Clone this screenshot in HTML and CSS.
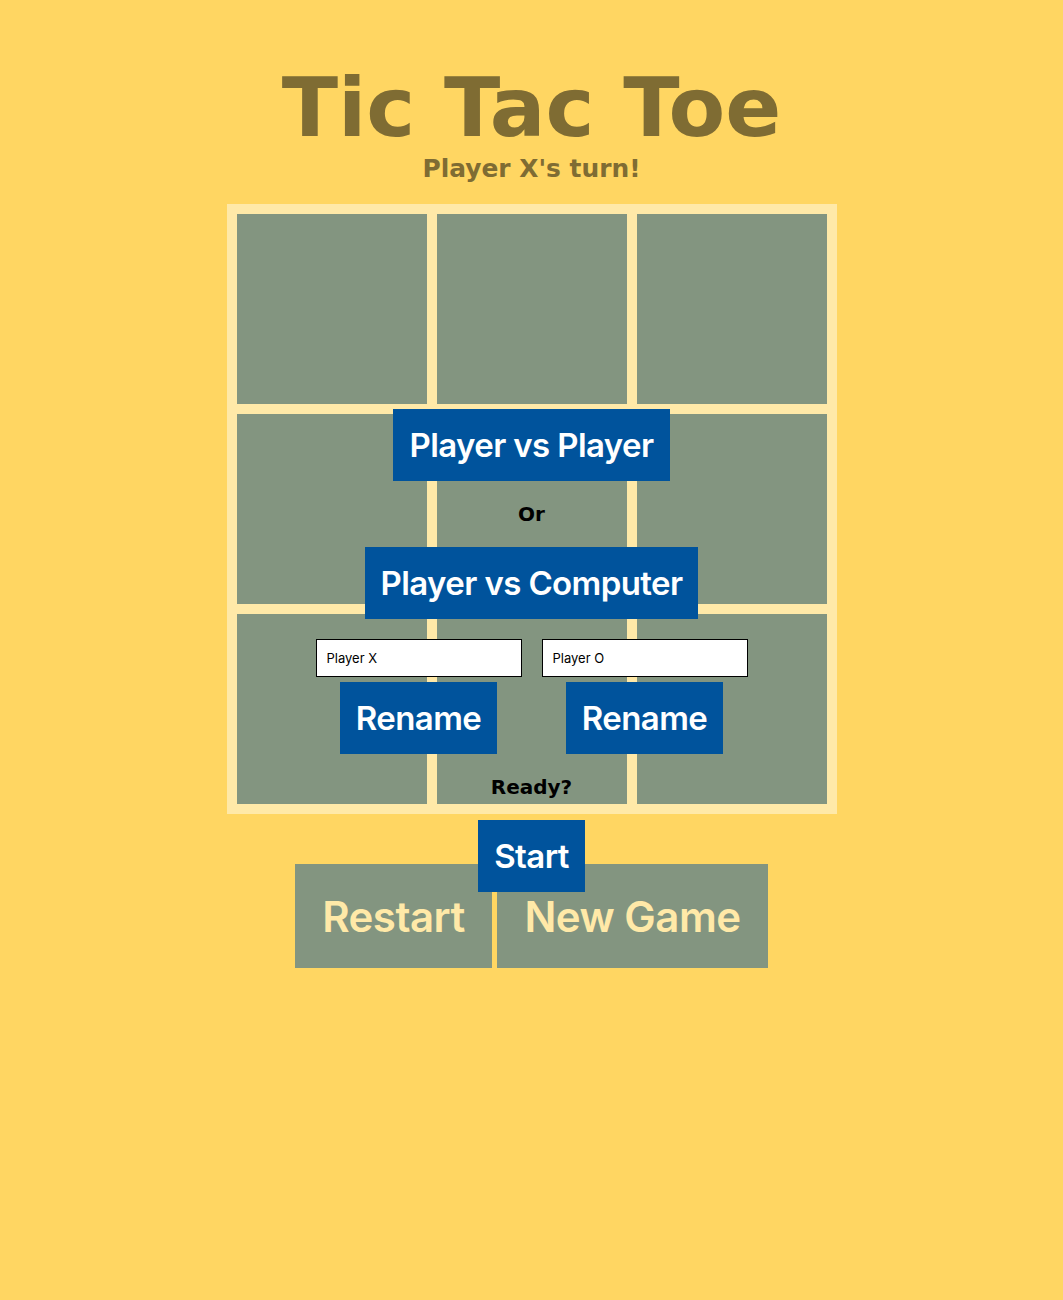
FILE: index.html
```html
<!DOCTYPE html>
<html lang="en">
<head>
<meta charset="utf-8">
<title>Tic Tac Toe</title>
<link rel="stylesheet" href="styles.css">
</head>
<body>
<main class="page">
  <h1 class="title">Tic Tac Toe</h1>
  <h2 class="status">Player X's turn!</h2>
  <div class="game">
    <div class="board">
      <div class="cell"></div><div class="cell"></div><div class="cell"></div>
      <div class="cell"></div><div class="cell"></div><div class="cell"></div>
      <div class="cell"></div><div class="cell"></div><div class="cell"></div>
    </div>
    <div class="controls">
      <button class="ctrl ctrl-restart">Restart</button>
      <button class="ctrl ctrl-new">New Game</button>
    </div>
    <div class="setup">
      <button class="btn">Player vs Player</button>
      <p class="label">Or</p>
      <button class="btn">Player vs Computer</button>
      <div class="names">
        <div class="name-col">
          <input class="name-input" type="text" value="Player X">
          <button class="btn">Rename</button>
        </div>
        <div class="name-col">
          <input class="name-input" type="text" value="Player O">
          <button class="btn">Rename</button>
        </div>
      </div>
      <p class="label">Ready?</p>
      <button class="btn">Start</button>
    </div>
  </div>
</main>
</body>
</html>
```
FILE: styles.css
```css
html, body {
  margin: 0;
  padding: 0;
  background: #FFD662;
}
body {
  min-height: 1300px;
  font-family: "DejaVu Sans", Verdana, sans-serif;
}
.page {
  padding-top: 8px;
  display: flex;
  flex-direction: column;
  align-items: center;
}
.title {
  margin: 53px 0 0;
  font-size: 82.6px;
  line-height: 93px;
  font-weight: bold;
  color: #7F6C33;
  white-space: nowrap;
}
.status {
  margin: 1px 0 0;
  font-size: 24.9px;
  line-height: 28px;
  font-weight: bold;
  color: #7F6C33;
  white-space: nowrap;
}
.game {
  position: relative;
  margin-top: 21px;
  display: flex;
  flex-direction: column;
  align-items: center;
}
.board {
  width: 610px;
  box-sizing: border-box;
  padding: 10px;
  background: #FFE9A8;
  display: grid;
  grid-template-columns: repeat(3, 190px);
  grid-auto-rows: 190px;
  gap: 10px;
}
.cell {
  background: #839580;
}
.controls {
  margin-top: 50px;
  display: flex;
  gap: 5px;
}
.ctrl {
  height: 104px;
  border: none;
  background: #839580;
  color: #FFE9A8;
  font-family: Inter, "Noto Sans", sans-serif;
  font-weight: 600;
  font-size: 42px;
  letter-spacing: -0.5px;
  padding: 0;
  margin: 0;
  white-space: nowrap;
}
.ctrl-restart { width: 197px; }
.ctrl-new { width: 271px; }
.setup {
  position: absolute;
  top: 205px;
  left: 0;
  right: 0;
  display: flex;
  flex-direction: column;
  align-items: center;
}
.btn {
  height: 72px;
  border: none;
  margin: 0;
  padding: 0 16px;
  background: #00539C;
  color: #ffffff;
  font-family: Inter, "Noto Sans", sans-serif;
  font-weight: 600;
  font-size: 33px;
  letter-spacing: -0.6px;
  white-space: nowrap;
}
.label {
  margin: 0;
  padding: 21px 0;
  line-height: 24px;
  font-size: 20px;
  font-weight: bold;
  color: #000;
}
.names {
  margin-top: 20px;
  display: flex;
  gap: 20px;
}
.name-col {
  display: flex;
  flex-direction: column;
  align-items: center;
  gap: 5px;
}
.name-input {
  width: 206px;
  height: 38px;
  box-sizing: border-box;
  border: 1px solid #000;
  background: #fff;
  padding: 0 10px;
  margin: 0;
  font-family: Inter, "Noto Sans", sans-serif;
  font-size: 13px;
  color: #000;
}
```
